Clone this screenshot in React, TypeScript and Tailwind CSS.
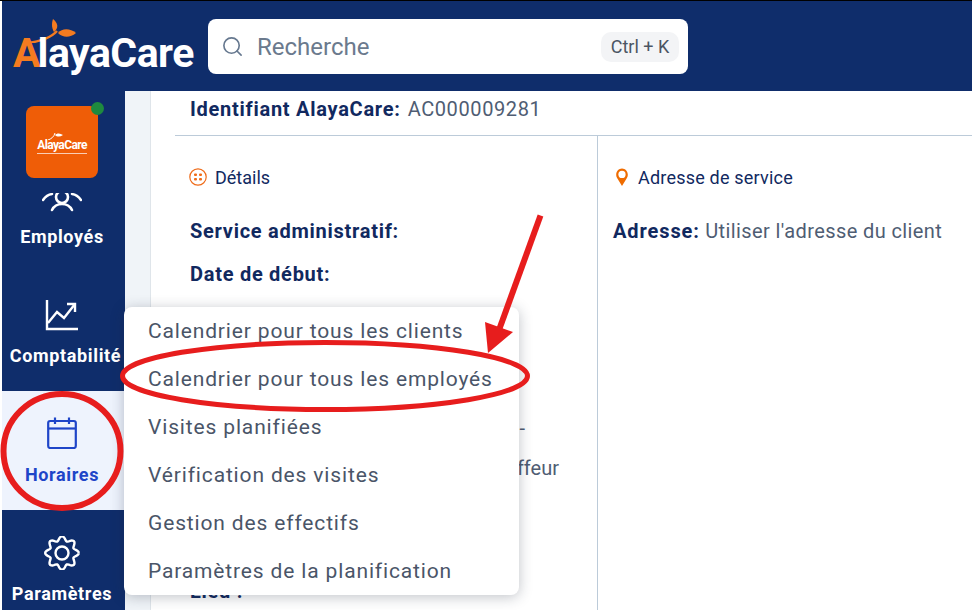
import type { ReactNode } from 'react';
import { Search } from 'lucide-react';

const menuItems = [
  'Calendrier pour tous les clients',
  'Calendrier pour tous les employés',
  'Visites planifiées',
  'Vérification des visites',
  'Gestion des effectifs',
  'Paramètres de la planification',
];

// soft eight lobed cog outline
const gearPath = Array.from({ length: 97 }, (_, i) => {
  const t = (i / 96) * Math.PI * 2;
  const r = 14.6 + 2.2 * Math.cos(8 * t);
  const x = 18 + r * Math.cos(t);
  const y = 17 + r * Math.sin(t);
  return `${i === 0 ? 'M' : 'L'}${x.toFixed(2)} ${y.toFixed(2)}`;
}).join(' ');

function NavItem({ icon, label, active, labelClass = '' }: { icon: ReactNode; label: string; active?: boolean; labelClass?: string }) {
  return (
    <div
      className={`flex h-[119px] flex-col items-center pr-[3px] pt-[26px] ${
        active ? 'bg-[#eef3fd] text-[#1e45c8]' : 'text-white'
      }`}
    >
      <div className="flex h-[34px] items-center justify-center">{icon}</div>
      <span className={`mt-[14px] text-[18px] leading-[20px] font-bold tracking-[0.65px] whitespace-nowrap ${labelClass}`}>{label}</span>
    </div>
  );
}

function Sprout() {
  return (
    <svg className="absolute left-[28px] top-[18px] h-[24px] w-[48px]" viewBox="0 0 48 24" fill="none">
      <path d="M0 24C8 22 20 20 27 12" stroke="#f47b20" strokeWidth="2.4" />
      <path d="M24 13C21 8 22 3 23 0C28 4 29 9 24 13Z" fill="#f47b20" />
      <path d="M28 14C32 9 40 9 46 14C40 19 33 19 28 14Z" fill="#f47b20" />
    </svg>
  );
}

export default function App() {
  return (
    <div className="relative h-[610px] w-[972px] overflow-hidden bg-white pl-[2px] font-['Roboto',sans-serif]">
      <div className="h-px bg-black -ml-[2px]" />

      {/* Top bar */}
      <header className="flex h-[90px] items-start bg-[#0f2d6b]">
        <div className="relative h-[80px] w-[206px] shrink-0">
          <Sprout />
          <div className="absolute left-[11px] top-[30px] flex items-baseline text-[41px] leading-[44px] font-bold tracking-[-0.5px] text-white">
            <span className="tracking-[-3px] text-[#f47b20]">A</span>
            <span>layaCare</span>
          </div>
        </div>
        <div className="mt-[18px] flex h-[55px] w-[480px] items-center rounded-lg bg-white pl-[13px] pr-[9px]">
          <Search className="h-[23px] w-[23px] text-[#66788f]" strokeWidth={1.7} />
          <span className="ml-[13px] flex-1 text-[24px] text-[#6b7a8d]">Recherche</span>
          <span className="flex h-[30px] w-[78px] items-center justify-center rounded-[10px] bg-[#f3f4f6] text-[18px] text-[#4b5563]">
            Ctrl + K
          </span>
        </div>
      </header>

      <div className="flex h-[519px]">
        {/* Sidebar */}
        <aside className="relative h-full w-[123px] shrink-0 overflow-hidden bg-[#0f2d6b] pt-[62px]">
          <NavItem
            label="Employés"
            icon={
              <svg className="h-[34px] w-[40px]" viewBox="0 0 40 34" fill="none" stroke="currentColor" strokeWidth="2.6" strokeLinecap="round">
                <circle cx="20" cy="18" r="6" />
                <path d="M10 31C12 27 15 25 20 25C25 25 28 27 30 31" />
                <path d="M1 21C3 18 6 15.5 10 15" />
                <path d="M39 21C37 18 34 15.5 30 15" />
              </svg>
            }
          />
          <NavItem
            label="Comptabilité"
            labelClass="ml-[7px]"
            icon={
              <svg className="h-[32px] w-[34px]" viewBox="0 0 34 32" fill="none" stroke="currentColor" strokeWidth="2.4">
                <path d="M2 1V30H33" />
                <path d="M3 24L12 13L19 19L30 5" />
                <path d="M22 5H30V13" />
              </svg>
            }
          />
          <NavItem
            active
            label="Horaires"
            icon={
              <svg className="-mt-[3px] h-[32px] w-[30px]" viewBox="0 0 30 32" fill="none" stroke="currentColor" strokeWidth="2.2" strokeLinejoin="round">
                <rect x="1.2" y="4" width="27.6" height="27" rx="2" />
                <path d="M1.2 11.5H28.8" />
                <path d="M8 0.5V7M22 0.5V7" />
              </svg>
            }
          />
          <NavItem
            label="Paramètres"
            icon={
              <svg className="h-[34px] w-[36px]" viewBox="0 0 36 34" fill="none" stroke="currentColor" strokeWidth="2.4">
                <path d={gearPath} />
                <circle cx="18" cy="17" r="6.5" />
              </svg>
            }
          />

          <div className="absolute left-0 top-0 h-[102px] w-full bg-[#0f2d6b]">
            <div className="absolute left-[24px] top-[15px] flex h-[72px] w-[72px] items-center justify-center rounded-lg bg-[#ef5d07] pt-[6px]">
              <div className="relative text-[12px] leading-none font-bold tracking-[-0.6px] text-white">
                <svg className="absolute -top-[9px] left-[11px] h-[10px] w-[16px]" viewBox="0 0 16 10" fill="none">
                  <path d="M0 10C3 9 6 7 7 3" stroke="white" strokeWidth="1" />
                  <path d="M7 5C9 3 12 3 15 5C12 7 9 7 7 5Z" fill="white" />
                </svg>
                AlayaCare
                <div className="absolute -bottom-[3px] left-0 h-px w-full bg-white/70" />
              </div>
            </div>
            <div className="absolute left-[89px] top-[11px] h-[13px] w-[13px] rounded-full bg-[#1e8a3f]" />
          </div>
        </aside>

        {/* Page */}
        <main className="flex min-w-0 flex-1 bg-[#f0f4f8] pl-[25px]">
          <div className="flex-1 border-l border-[#dfe5ea] bg-white pl-[24px]">
            <div className="flex h-[45px] items-start border-b border-[#bccbd9] pl-[15px] pt-[5px] text-[20px] leading-[26px]">
              <span className="font-bold tracking-[0.73px] text-[#11295f]">Identifiant AlayaCare:</span>
              <span className="ml-[7px] tracking-[0.6px] text-[#4f5d73]">AC000009281</span>
            </div>
            <div className="flex h-[474px]">
              <section className="w-[423px] shrink-0 border-r border-[#bccbd9] pl-[15px] pt-[29px]">
                <div className="-ml-px flex h-[24px] items-center text-[#11295f]">
                  <svg className="h-[18px] w-[18px]" viewBox="0 0 18 18" fill="none" stroke="#ef6c1a" strokeWidth="1.2">
                    <circle cx="9" cy="9" r="8.2" />
                    <rect x="5" y="5.4" width="3" height="2.6" rx="1" fill="#ef6c1a" stroke="none" />
                    <rect x="10" y="5.4" width="3" height="2.6" rx="1" fill="#ef6c1a" stroke="none" />
                    <rect x="5" y="10" width="3" height="2.6" rx="1" fill="#ef6c1a" stroke="none" />
                    <rect x="10" y="10" width="3" height="2.6" rx="1" fill="#ef6c1a" stroke="none" />
                  </svg>
                  <span className="ml-[8px] text-[18px]">Détails</span>
                </div>
                <p className="mt-[29px] text-[20px] leading-[26px] font-bold tracking-[0.73px] text-[#11295f]">Service administratif:</p>
                <p className="mt-[17px] text-[20px] leading-[26px] font-bold tracking-[0.73px] text-[#11295f]">Date de début:</p>
                <p className="mt-[128px] w-[335px] text-right text-[20px] leading-[26px] text-[#4f5d73]">-</p>
                <p className="mt-[14px] w-[369px] text-right text-[20px] leading-[26px] text-[#4f5d73]">Chauffeur</p>
                <p className="mt-[97px] text-[20px] leading-[26px] font-bold tracking-[0.73px] text-[#11295f]">Lieu :</p>
              </section>
              <section className="flex-1 pl-[15px] pt-[29px]">
                <div className="flex h-[24px] items-center pl-[2px] text-[#11295f]">
                  <svg className="h-[20px] w-[14px]" viewBox="0 0 14 20" fill="none">
                    <path d="M7 19L2.4 11.6C1.6 10.4 1.2 9.2 1.2 7.6C1.2 4.2 3.8 1.4 7 1.4C10.2 1.4 12.8 4.2 12.8 7.6C12.8 9.2 12.4 10.4 11.6 11.6Z" fill="#ef6c00" />
                    <circle cx="7" cy="7.4" r="3.6" fill="white" />
                  </svg>
                  <span className="ml-[9px] text-[18px] tracking-[0.2px]">Adresse de service</span>
                </div>
                <p className="mt-[29px] whitespace-nowrap text-[20px] leading-[26px] tracking-[0.4px] text-[#4f5d73]">
                  <span className="font-bold tracking-[0.9px] text-[#11295f]">Adresse:</span> Utiliser l'adresse du client
                </p>
              </section>
            </div>
          </div>
        </main>
      </div>

      {/* Schedule flyout */}
      <div className="absolute left-[124px] top-[307px] w-[395px] rounded-lg bg-white shadow-[0_2px_14px_rgba(30,41,59,0.28)]">
        {menuItems.map((item) => (
          <div key={item} className="flex h-[48px] items-center px-6 pt-[2px] text-[21px] tracking-[0.85px] whitespace-nowrap text-[#4a5568]">
            {item}
          </div>
        ))}
      </div>

      {/* Red annotations drawn on the capture */}
      <svg className="pointer-events-none absolute left-0 top-0 h-[610px] w-[972px]" viewBox="0 0 972 610" fill="none">
        <ellipse cx="325" cy="376" rx="202.5" ry="33.5" stroke="#e71d1d" strokeWidth="5" />
        <ellipse cx="62" cy="451" rx="58.5" ry="57" stroke="#e71d1d" strokeWidth="6" />
        <path d="M540.5 215.5L499 330" stroke="#e71d1d" strokeWidth="6" />
        <path d="M485 322L513 332L488 353Z" fill="#e71d1d" />
      </svg>
    </div>
  );
}
